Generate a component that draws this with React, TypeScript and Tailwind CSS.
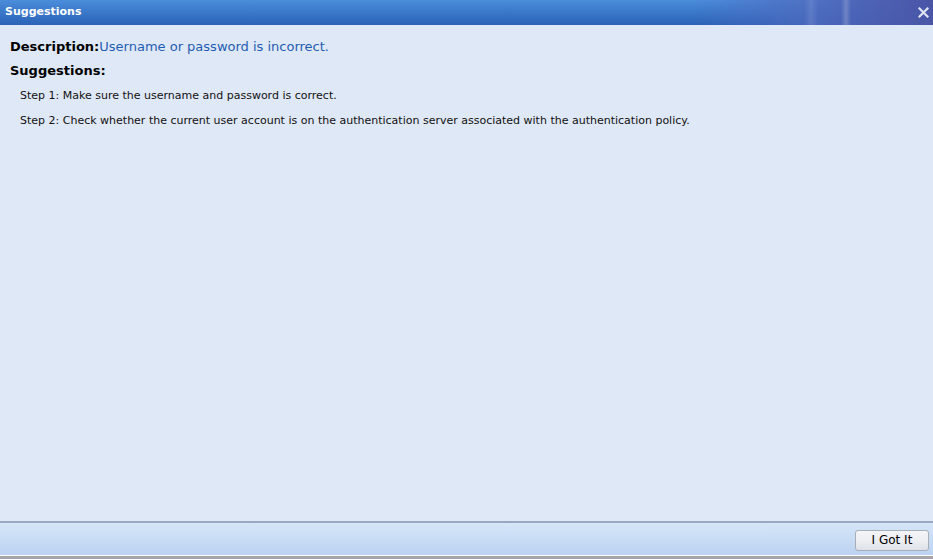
export default function App() {
  const font = { fontFamily: '"DejaVu Sans", Verdana, sans-serif' };
  return (
    <div className="flex h-[559px] w-[933px] flex-col overflow-hidden bg-[#dfe8f6]" style={font}>
      {/* title bar */}
      <div className="relative flex h-[25px] shrink-0 items-center justify-between overflow-hidden bg-gradient-to-b from-[#4b8ddb] to-[#2a62b7] pl-[5px] pr-[4px]">
        <div className="pointer-events-none absolute inset-y-0 right-0 w-[240px] bg-gradient-to-r from-transparent via-[#5069bd]/80 to-[#4a55a6]" />
        <div className="pointer-events-none absolute inset-y-0 right-[82px] w-[10px] bg-gradient-to-r from-transparent via-white/20 to-transparent" />
        <div className="pointer-events-none absolute inset-y-0 right-[115px] w-[14px] bg-gradient-to-r from-transparent via-white/10 to-transparent" />
        <span className="relative text-[11px] font-bold text-white">Suggestions</span>
        <svg className="relative" width="11" height="11" viewBox="0 0 11 11">
          <path d="M1.5 1.5 L9.5 9.5 M9.5 1.5 L1.5 9.5" stroke="#dfe4f4" strokeWidth="2.2" strokeLinecap="square" />
        </svg>
      </div>

      {/* content */}
      <div className="flex-1 px-[10px] pt-[13px]">
        <div className="text-[13px] leading-[18px]">
          <span className="font-bold text-black">Description:</span>
          <span className="text-[#1e5db3]">Username or password is incorrect.</span>
        </div>
        <div className="mt-[6px] text-[13px] font-bold leading-[18px] text-black">Suggestions:</div>
        <div className="mt-[9px] pl-[10px] text-[11px] leading-[14px] text-[#111]">
          <div>Step 1: Make sure the username and password is correct.</div>
          <div className="mt-[11px]">
            Step 2: Check whether the current user account is on the authentication server associated with the authentication policy.
          </div>
        </div>
      </div>

      {/* footer */}
      <div className="flex h-[38px] shrink-0 flex-col border-t-2 border-[#98a8c2]">
        <div className="flex flex-1 items-center justify-end bg-gradient-to-b from-[#d5e6f7] to-[#bcd2f1] pr-[4px] pt-[2px]">
          <button className="h-[21px] w-[74px] rounded-[3px] border border-[#a8aeb8] bg-gradient-to-b from-[#f4f5f8] via-[#eceef2] to-[#dfe2e8] text-[12px] text-black" style={font}>
            I Got It
          </button>
        </div>
        <div className="h-[1px] bg-white" />
        <div className="h-[3px] bg-[#a5a5a5]" />
      </div>
    </div>
  );
}
